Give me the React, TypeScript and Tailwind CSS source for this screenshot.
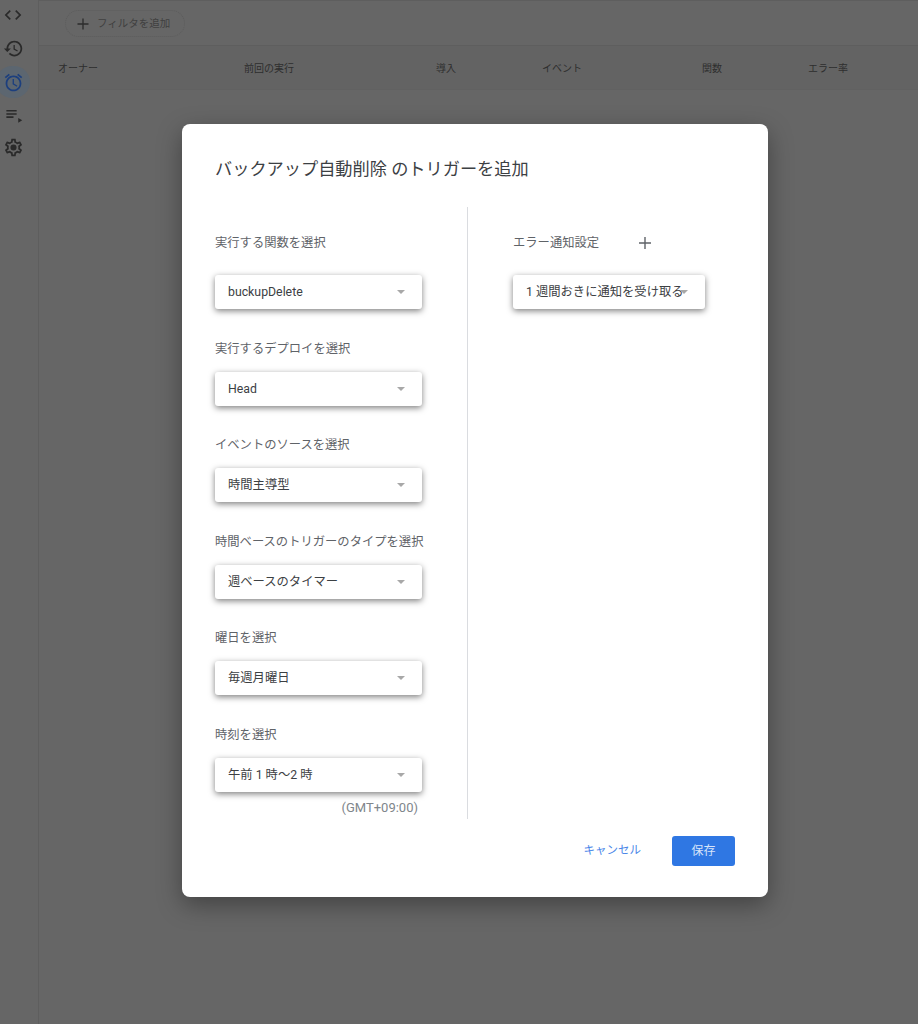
const SANS = 'font-["Roboto","Noto_Sans_CJK_JP",sans-serif]'

const Icon = ({ d, className }: { d: string; className: string }) => (
    <svg viewBox="0 0 24 24" fill="currentColor" className={className}>
        <path d={d} />
    </svg>
)

const CODE_PATH =
    'M9.4 16.6L4.8 12l4.6-4.6L8 6l-6 6 6 6 1.4-1.4zm5.2 0l4.6-4.6-4.6-4.6L16 6l6 6-6 6-1.4-1.4z'
const HISTORY_PATH =
    'M13 3c-4.97 0-9 4.03-9 9H1l3.89 3.89.07.14L9 12H6c0-3.87 3.13-7 7-7s7 3.13 7 7-3.13 7-7 7c-1.93 0-3.68-.79-4.94-2.06l-1.42 1.42C8.27 19.99 10.51 21 13 21c4.97 0 9-4.03 9-9s-4.03-9-9-9zm-1 5v5l4.28 2.54.72-1.21-3.5-2.08V8H12z'
const ALARM_PATH =
    'M22 5.72l-4.6-3.86-1.29 1.53 4.6 3.86L22 5.72zM7.88 3.39L6.6 1.86 2 5.71l1.29 1.53 4.59-3.85zM12.5 8H11v6l4.75 2.85.75-1.23-4-2.37V8zM12 4c-4.97 0-9 4.03-9 9s4.03 9 9 9c4.97 0 9-4.03 9-9s-4.03-9-9-9zm0 16c-3.87 0-7-3.13-7-7s3.13-7 7-7 7 3.13 7 7-3.13 7-7 7z'
const PLAYLIST_PATH = 'M3 5h13v2H3V5zm0 4h13v2H3V9zm0 4h9v2H3v-2zm15 2v6l5-3-5-3z'
const SETTINGS_PATH =
    'M19.43 12.98c.04-.32.07-.64.07-.98 0-.34-.03-.66-.07-.98l2.11-1.65c.19-.15.24-.42.12-.64l-2-3.46c-.09-.16-.26-.25-.44-.25-.06 0-.12.01-.17.03l-2.49 1c-.52-.4-1.08-.73-1.69-.98l-.38-2.65C14.46 2.18 14.25 2 14 2h-4c-.25 0-.46.18-.49.42l-.38 2.65c-.61.25-1.17.59-1.69.98l-2.49-1c-.06-.02-.12-.03-.18-.03-.17 0-.34.09-.43.25l-2 3.46c-.13.22-.07.49.12.64l2.11 1.65c-.04.32-.07.65-.07.98 0 .33.03.66.07.98l-2.11 1.65c-.19.15-.24.42-.12.64l2 3.46c.09.16.26.25.44.25.06 0 .12-.01.17-.03l2.49-1c.52.4 1.08.73 1.69.98l.38 2.65c.03.24.24.42.49.42h4c.25 0 .46-.18.49-.42l.38-2.65c.61-.25 1.17-.59 1.69-.98l2.49 1c.06.02.12.03.18.03.17 0 .34-.09.43-.25l2-3.46c.12-.22.07-.49-.12-.64l-2.11-1.65zm-1.98-1.71c.04.31.05.52.05.73 0 .21-.02.43-.05.73l-.14 1.13.89.7 1.08.84-.7 1.21-1.27-.51-1.04-.42-.9.68c-.43.32-.84.56-1.25.73l-1.06.43-.16 1.13-.2 1.35h-1.4l-.19-1.35-.16-1.13-1.06-.43c-.43-.18-.83-.41-1.23-.71l-.91-.7-1.06.43-1.27.51-.7-1.21 1.08-.84.89-.7-.14-1.13c-.03-.31-.05-.54-.05-.74s.02-.43.05-.73l.14-1.13-.89-.7-1.08-.84.7-1.21 1.27.51 1.04.42.9-.68c.43-.32.84-.56 1.25-.73l1.06-.43.16-1.13.2-1.35h1.39l.19 1.35.16 1.13 1.06.43c.43.18.83.41 1.23.71l.91.7 1.06-.43 1.27-.51.7 1.21-1.07.85-.89.7.14 1.13zM12 8.5a3.5 3.5 0 1 0 0 7 3.5 3.5 0 0 0 0-7z'

const Sidebar = () => (
    <aside className="w-[39px] shrink-0 border-r border-[#5e5e5e] overflow-hidden">
        <div className="flex flex-col items-start text-[#2a2a2a]">
            <div className="h-[30px] w-[26px] flex items-center justify-center">
                <Icon d={CODE_PATH} className="w-[20px] h-[20px]" />
            </div>
            <div className="h-[36px] w-[26px] flex items-center justify-center">
                <Icon d={HISTORY_PATH} className="w-[21px] h-[21px]" />
            </div>
            <div className="h-[32px] w-[34px] -ml-[4px] shrink-0 rounded-full bg-[#5c6670] flex items-center justify-center">
                <Icon d={ALARM_PATH} className="w-[21px] h-[21px] text-[#1c3f7e]" />
            </div>
            <div className="h-[34px] w-[26px] flex items-center justify-center">
                <Icon d={PLAYLIST_PATH} className="w-[19px] h-[19px]" />
            </div>
            <div className="h-[30px] w-[26px] flex items-center justify-center">
                <Icon d={SETTINGS_PATH} className="w-[21px] h-[21px]" />
            </div>
        </div>
    </aside>
)

const Background = () => (
    <div className="flex-1 min-w-0">
        <div className="h-[46px] border-b border-t border-[#5e5e5e] pl-[26px] pt-[9px]">
            <div className="w-[120px] h-[27px] rounded-full border border-dotted border-[#5c5c5c] flex items-center pl-[11px] gap-[8px] text-[10.5px] text-[#404040]">
                <svg viewBox="0 0 12 12" className="w-[12px] h-[12px]" stroke="#2c2c2c" strokeWidth="1.3">
                    <path d="M6 0.5v11M0.5 6h11" />
                </svg>
                <span>フィルタを追加</span>
            </div>
        </div>
        <div className="h-[44px] bg-[#636363] border-b border-[#616161] pl-[19px] pt-[1px] grid grid-cols-[186px_192px_106px_160px_106px_1fr] items-center text-[10px] text-[#2e2e2e]">
            <span>オーナー</span>
            <span>前回の実行</span>
            <span>導入</span>
            <span>イベント</span>
            <span>関数</span>
            <span>エラー率</span>
        </div>
    </div>
)

const SelectBox = ({ value, width = 'w-[207px]' }: { value: string; width?: string }) => (
    <div
        className={`${width} h-[34px] bg-white rounded-[3px] shadow-[0_2px_6px_rgba(0,0,0,0.5)] flex items-center pl-[13px] pt-[1px] text-[12.3px] text-[#3c4043] relative`}
    >
        <span className="whitespace-nowrap">{value}</span>
        <span className="absolute top-[15px] right-[17px] w-0 h-0 border-x-[4.5px] border-x-transparent border-t-[4.5px] border-t-[#a8a8a8]" />
    </div>
)

const Field = ({ label, value, gap, top }: { label: string; value: string; gap: string; top: string }) => (
    <div className={top}>
        <div className={`text-[12.3px] leading-[18px] text-[#5f6368] whitespace-nowrap ${gap}`}>{label}</div>
        <SelectBox value={value} />
    </div>
)

const Dialog = () => (
    <div className="absolute left-[182px] top-[124px] w-[586px] h-[773px] bg-white rounded-[8px] shadow-[0_8px_24px_rgba(0,0,0,0.35)] pt-[33px]">
        <h2 className="pl-[33px] text-[17.2px] leading-[24px] font-normal text-[#3c4043]">
            バックアップ自動削除 のトリガーを追加
        </h2>
        <div className="mt-[26px] ml-[33px] flex h-[612px]">
            <div className="w-[253px] border-r border-[#dadce0] pt-[27px]">
                <Field label="実行する関数を選択" value="buckupDelete" gap="mb-[23px]" top="" />
                <Field label="実行するデプロイを選択" value="Head" gap="mb-[14px]" top="mt-[30.5px]" />
                <Field label="イベントのソースを選択" value="時間主導型" gap="mb-[14px]" top="mt-[30.5px]" />
                <Field label="時間ベースのトリガーのタイプを選択" value="週ベースのタイマー" gap="mb-[14px]" top="mt-[30.5px]" />
                <Field label="曜日を選択" value="毎週月曜日" gap="mb-[14px]" top="mt-[30.5px]" />
                <Field label="時刻を選択" value="午前 1 時〜2 時" gap="mb-[14px]" top="mt-[30.5px]" />
                <div className="w-[203px] mt-[7px] text-right text-[13px] leading-[18px] text-[#80868b]">(GMT+09:00)</div>
            </div>
            <div className="pl-[45px] pt-[27px]">
                <div className="flex items-center gap-[40px] h-[18px] mb-[23px]">
                    <span className="text-[12.3px] text-[#5f6368]">エラー通知設定</span>
                    <svg viewBox="0 0 12 12" className="w-[12px] h-[12px]" stroke="#5f6368" strokeWidth="1.4">
                        <path d="M6 0v12M0 6h12" />
                    </svg>
                </div>
                <SelectBox value="1 週間おきに通知を受け取る" width="w-[192px]" />
            </div>
        </div>
        <div className="mt-[17px] pr-[33px] flex items-center justify-end gap-[31px]">
            <span className="text-[11.5px] text-[#4a86e8]">キャンセル</span>
            <div className="w-[63px] h-[30px] rounded-[3px] bg-[#2f77e3] flex items-center justify-center text-[12px] text-[#d6e4fa]">
                保存
            </div>
        </div>
    </div>
)

export default function App() {
    return (
        <div className={`relative w-[918px] h-[1024px] overflow-hidden bg-[#666666] flex ${SANS}`}>
            <Sidebar />
            <Background />
            <Dialog />
        </div>
    )
}
